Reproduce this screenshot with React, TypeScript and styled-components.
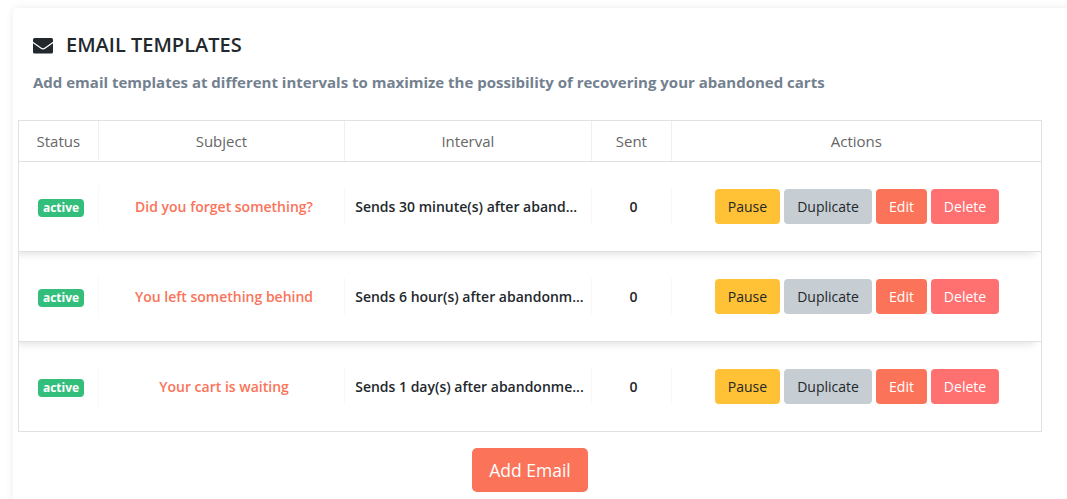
import React from "react";
import styled, { createGlobalStyle } from "styled-components";

const GlobalStyle = createGlobalStyle`
  *, *::before, *::after { box-sizing: border-box; }
  html, body { margin: 0; height: 100%; overflow: hidden; background: #fff; }
  body {
    font-family: "Open Sans", "Liberation Sans", sans-serif;
    font-size: 14px;
    color: #23282c;
  }
`;

const Page = styled.main`
  height: 499px;
  padding: 8px 0 0 13px;
  overflow: hidden;
`;

const Card = styled.section`
  width: 1100px;
  height: 560px;
  padding: 22px 0 0 5px;
  border-radius: 4px;
  background: #fff;
  box-shadow: 0 0 8px rgba(0, 0, 0, 0.08);
`;

const Title = styled.h1`
  display: flex;
  align-items: center;
  gap: 13px;
  height: 30px;
  margin: 0 0 0 15px;
  font-size: 20px;
  line-height: 30px;
  font-weight: 600;
  text-transform: uppercase;
  white-space: nowrap;
`;

const EnvelopeSvg = styled.svg`
  flex: none;
  margin-top: 2px;
`;

const Subtitle = styled.p`
  height: 24px;
  margin: 10px 0 26px 15px;
  font-size: 15px;
  line-height: 24px;
  font-weight: 700;
  color: #73818f;
  white-space: nowrap;
`;

const Table = styled.div`
  width: 1024px;
  border: 1px solid #e1e1e1;
  overflow: hidden;
`;

const Columns = styled.div`
  display: grid;
  grid-template-columns: 80px 246px 247px 80px 369px;
  align-items: center;
`;

const HeaderRow = styled(Columns)`
  height: 41px;
  border-bottom: 1px solid #e1e1e1;
`;

const HeaderCell = styled.div`
  height: 40px;
  padding-right: 0.3px;
  border-right: 1px solid #efefef;
  font-size: 15px;
  line-height: 41px;
  text-align: center;
  color: #666;

  &:last-child { border-right: 0; }
`;

const Row = styled(Columns)`
  height: 89px;

  &:not(:last-child) {
    height: 90px;
    border-bottom: 1px solid #e1e1e1;
    margin-left: -10px;
    padding-left: 10px;
    box-shadow: 0 8px 8px -6px rgba(0, 0, 0, 0.12);
  }
`;

const Cell = styled.div<{ $tall?: boolean }>`
  height: ${(p) => (p.$tall ? 41 : 37)}px;
  padding-left: 5px;
  border-right: 1px solid #f8f8f8;
  font-weight: 600;
  line-height: 37px;
  text-align: center;
  white-space: nowrap;
`;

const Interval = styled(Cell)`
  padding: 0 6px 0 10.2px;
  overflow: hidden;
  text-align: left;
`;

const Sent = styled(Cell)`
  padding-left: 4px;
`;

const Badge = styled.span`
  display: inline-block;
  width: 46px;
  height: 18px;
  margin-top: 13px;
  border-radius: 4px;
  background: #34be7b;
  color: #fff;
  font-size: 12px;
  line-height: 17px;
  font-weight: 700;
  vertical-align: top;
`;

const SubjectLink = styled.a`
  color: #fb7359;
`;

const Actions = styled.div`
  display: flex;
  justify-content: center;
  gap: 4px;
  padding-left: 1px;
`;

const Button = styled.button<{ $bg: string; $fg: string; $width: number }>`
  width: ${(p) => p.$width}px;
  height: 35px;
  padding: 0;
  border: 0;
  border-radius: 4px;
  background: ${(p) => p.$bg};
  color: ${(p) => p.$fg};
  font: 400 14px/35px "Open Sans", "Liberation Sans", sans-serif;
`;

const AddButton = styled(Button)`
  display: block;
  height: 44px;
  margin: 16px 0 0 454px;
  border-radius: 5px;
  font-size: 17.5px;
  line-height: 44px;
`;

const emails = [
  { subject: "Did you forget something?", interval: "Sends 30 minute(s) after aband..." },
  { subject: "You left something behind", interval: "Sends 6 hour(s) after abandonm..." },
  { subject: "Your cart is waiting", interval: "Sends 1 day(s) after abandonme..." },
];

const Envelope = () => (
  <EnvelopeSvg width="20" height="16" viewBox="0 0 20 16" aria-hidden="true">
    <rect width="20" height="15.5" rx="1.6" fill="#23282c" />
    <path
      d="M-0.5 4.2 L7.8 10 Q10 11.6 12.2 10 L20.5 4.2"
      fill="none"
      stroke="#fff"
      strokeWidth="1.2"
    />
  </EnvelopeSvg>
);

export default function App() {
  return (
    <Page>
      <GlobalStyle />
      <Card>
        <Title>
          <Envelope />
          Email Templates
        </Title>
        <Subtitle>
          Add email templates at different intervals to maximize the possibility of recovering your abandoned carts
        </Subtitle>
        <Table>
          <HeaderRow>
            {["Status", "Subject", "Interval", "Sent", "Actions"].map((name) => (
              <HeaderCell key={name}>{name}</HeaderCell>
            ))}
          </HeaderRow>
          {emails.map((email) => (
            <Row key={email.subject}>
              <Cell $tall>
                <Badge>active</Badge>
              </Cell>
              <Cell>
                <SubjectLink>{email.subject}</SubjectLink>
              </Cell>
              <Interval>{email.interval}</Interval>
              <Sent>0</Sent>
              <Actions>
                <Button $bg="#ffc135" $fg="#23282c" $width={65}>Pause</Button>
                <Button $bg="#c6cdd3" $fg="#23282c" $width={88}>Duplicate</Button>
                <Button $bg="#fb7359" $fg="#fff" $width={51}>Edit</Button>
                <Button $bg="#ff7070" $fg="#fff" $width={68}>Delete</Button>
              </Actions>
            </Row>
          ))}
        </Table>
        <AddButton $bg="#fb7359" $fg="#fff" $width={116}>Add Email</AddButton>
      </Card>
    </Page>
  );
}
